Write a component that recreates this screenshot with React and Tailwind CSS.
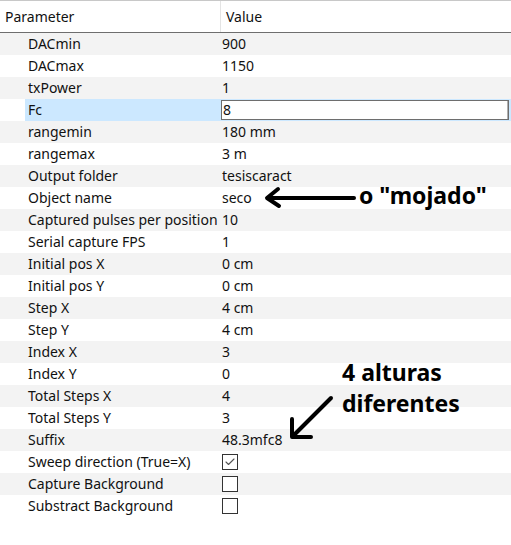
import { Check } from 'lucide-react'

const rows = [
  ['DACmin', '900'],
  ['DACmax', '1150'],
  ['txPower', '1'],
  ['Fc', '8', 'edit'],
  ['rangemin', '180 mm'],
  ['rangemax', '3 m'],
  ['Output folder', 'tesiscaract'],
  ['Object name', 'seco'],
  ['Captured pulses per position', '10'],
  ['Serial capture FPS', '1'],
  ['Initial pos X', '0 cm'],
  ['Initial pos Y', '0 cm'],
  ['Step X', '4 cm'],
  ['Step Y', '4 cm'],
  ['Index X', '3'],
  ['Index Y', '0'],
  ['Total Steps X', '4'],
  ['Total Steps Y', '3'],
  ['Suffix', '48.3mfc8'],
  ['Sweep direction (True=X)', true],
  ['Capture Background', false],
  ['Substract Background', false],
]

const CheckBox = ({ checked }) => (
  <span className="flex h-4 w-4 items-center justify-center border border-[#333333] bg-white">
    {checked && <Check size={12} strokeWidth={2.25} className="text-[#555555]" />}
  </span>
)

const Row = ({ name, value, mode, index }) => {
  const selected = mode === 'edit'
  const stripe = index % 2 === 0 ? 'bg-[#f3f3f3]' : 'bg-white'

  if (selected) {
    // selected row: blue band starts after the expander gutter
    return (
      <div className="h-[22px] bg-white pl-[25px]">
        <div className="grid h-full grid-cols-[195px_1fr] bg-[#cce8ff]">
          <div className="flex items-center pl-[3px] whitespace-nowrap">{name}</div>
          <div className="flex items-center pl-[1px] pr-[2px]">
            <div className="flex h-[20px] flex-1 items-center border border-[#6e6e6e] bg-white pl-[1px]">
              <span className="flex-1">{value}</span>
              <span className="h-full w-[1px] bg-[#b0b0b0]" />
            </div>
          </div>
        </div>
      </div>
    )
  }

  return (
    <div className={`grid h-[22px] grid-cols-[220px_1fr] ${stripe}`}>
      <div className="flex items-center pl-[28px] whitespace-nowrap">{name}</div>
      <div className="flex items-center pl-[2px]">
        {typeof value === 'boolean' ? <CheckBox checked={value} /> : value}
      </div>
    </div>
  )
}

const App = () => {
  return (
    <div
      className="relative h-[545px] w-[511px] overflow-hidden bg-white text-[14px] leading-none text-[#111111]"
      style={{ fontFamily: '"Noto Sans", "Open Sans", sans-serif' }}
    >
      <div className="grid h-[33px] grid-cols-[220px_1fr] border-t border-b border-t-[#c8c8c8] border-b-[#6e6e6e]">
        <div className="flex items-center pl-[5px]">Parameter</div>
        <div className="flex items-center border-l border-[#e4e4e4] pl-[5px]">Value</div>
      </div>

      {rows.map(([name, value, mode], i) => (
        <Row key={name} name={name} value={value} mode={mode} index={i} />
      ))}

      {/* annotations drawn over the table */}
      <div className="absolute left-[359px] top-[184px] text-[23px] font-bold text-black">o "mojado"</div>
      <div className="absolute left-[342px] top-[357px] text-[23px] font-bold leading-[31px] text-black">
        4 alturas
        <br />
        diferentes
      </div>
      <svg className="absolute left-0 top-0" width="511" height="545">
        <g stroke="#000" strokeWidth="4" strokeLinecap="round" strokeLinejoin="round" fill="none">
          <path d="M354 198 L268 198" />
          <path d="M278 189 L267 198 L279 206" />
          <path d="M331 398 L293 436" />
          <path d="M292 419 L292 437 L311 437" />
        </g>
      </svg>
    </div>
  )
}

export default App
